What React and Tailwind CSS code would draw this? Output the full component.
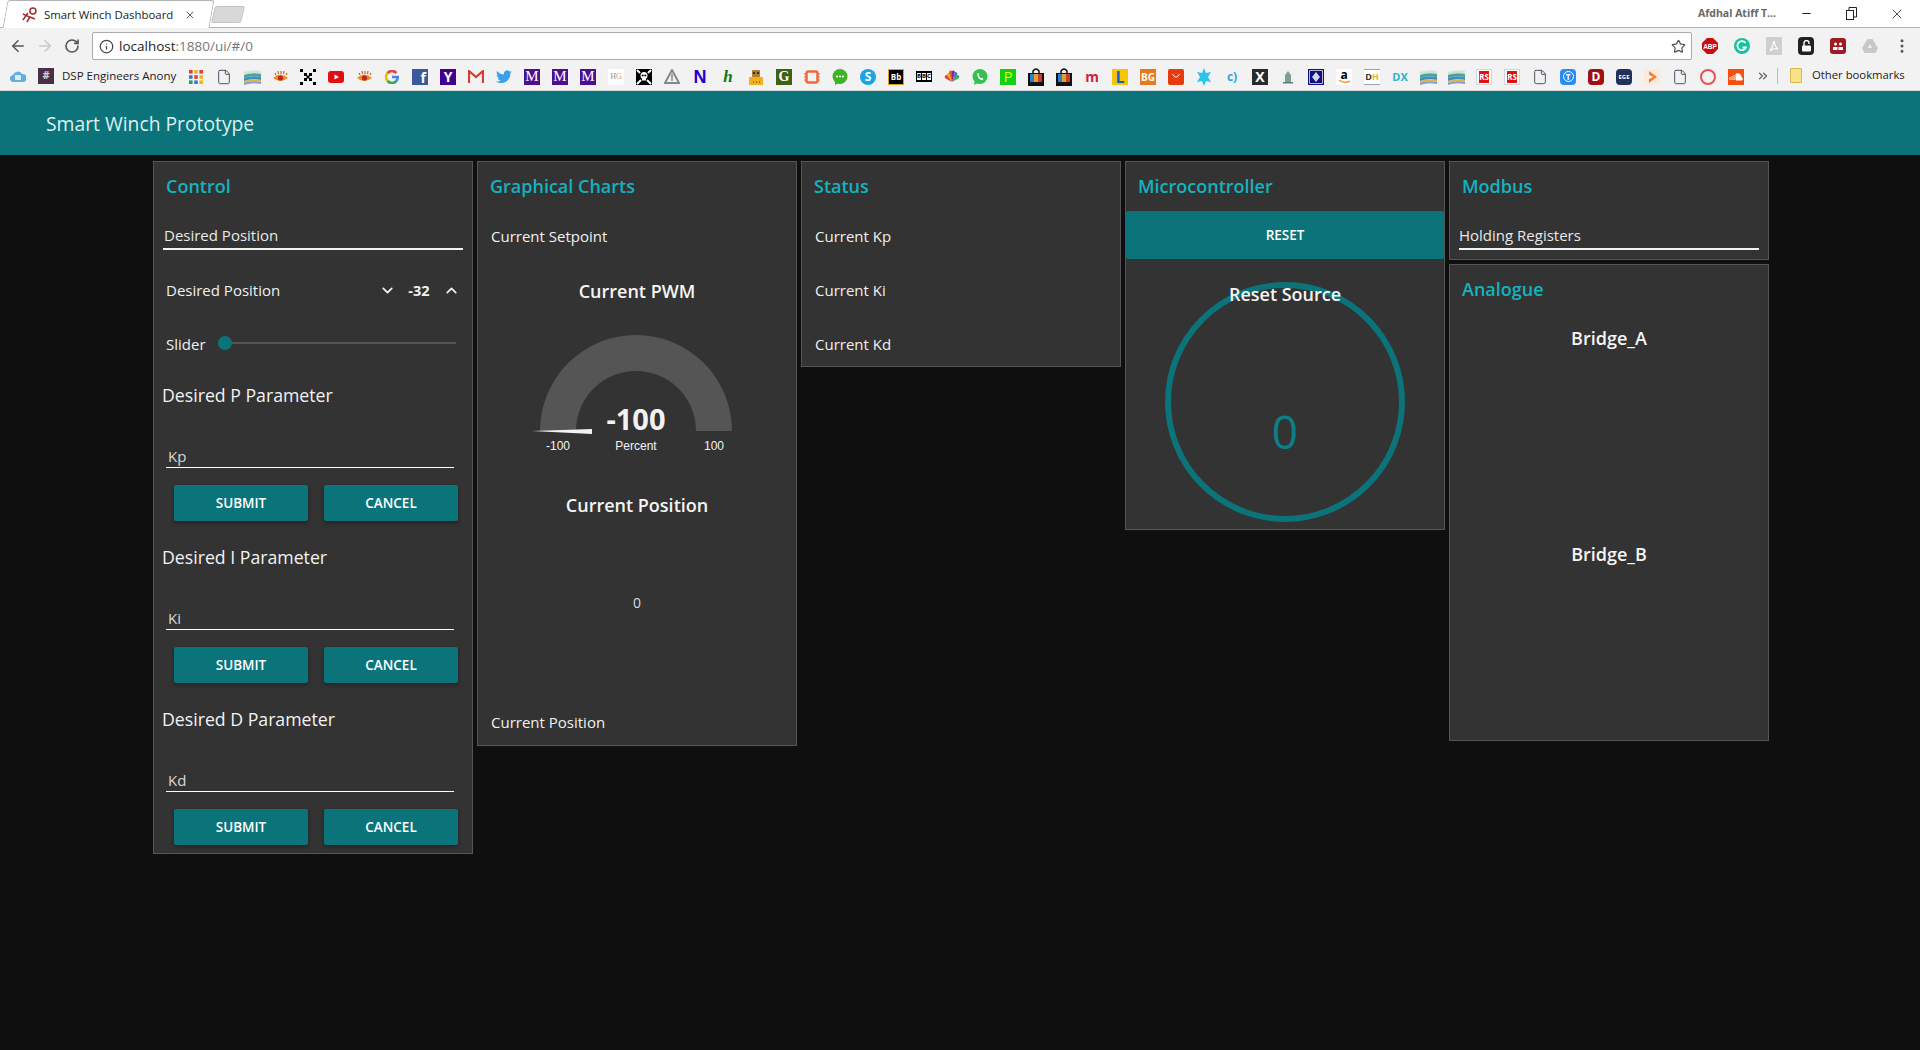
import React from 'react';
import { ArrowLeft, ArrowRight, RotateCw, Info, Star, ChevronDown, ChevronUp, X, Minus, EllipsisVertical, ChevronsRight, File } from 'lucide-react';

const uiFont = { fontFamily: '"Open Sans", sans-serif' };

// small square with letters, for the bookmark favicons
const Tile = ({ className, children }) => (
  <div className={`w-4 h-4 flex items-center justify-center leading-none font-bold ${className}`}>{children}</div>
);

const Doc = () => <File size={16} strokeWidth={1.5} className="text-gray-600" />;

const Layers = () => (
  <svg width="17" height="16" viewBox="0 0 17 16">
    <path d="M0 3 Q8 0 17 2 V5 Q8 3 0 6Z" fill="#cfe3dc" />
    <path d="M0 6 Q8 3 17 5 V8 Q8 6 0 9Z" fill="#4aa58f" />
    <path d="M0 9 Q8 6 17 8 V11 Q8 9 0 12Z" fill="#3f8fc4" />
    <path d="M0 12 Q8 9 17 11 V13 Q8 11 0 14Z" fill="#e2b04c" />
    <path d="M0 14 Q8 11 17 13 V15 Q8 13 0 16Z" fill="#7f9fd0" />
  </svg>
);

const Eye = () => (
  <svg width="17" height="14" viewBox="0 0 17 14">
    <path d="M1 8 Q8 1 16 8 Q8 14 1 8Z" fill="#f08a24" />
    <circle cx="8.5" cy="8" r="2.6" fill="#c0281c" />
    <path d="M3 3 L4 5 M6 1 L6.500 4 M9 1 L9 4 M12 1 L11.500 4 M15 3 L14 5" stroke="#e0561c" strokeWidth="1.200" />
  </svg>
);

const Bag = () => (
  <svg width="16" height="18" viewBox="0 0 16 18">
    <path d="M5 6 V3 Q8 -1 11 3 V6" fill="none" stroke="#111" strokeWidth="1.500" />
    <rect y="5" width="16" height="13" fill="#111" />
    <rect x="2" y="6" width="4" height="8" fill="#2a7fd0" />
    <rect x="6" y="6" width="4" height="8" fill="#e0a020" />
    <rect x="10" y="6" width="4" height="8" fill="#d03a2a" />
  </svg>
);

const MTile = () => <Tile className="bg-[#4b0f8f] text-white text-[15px] !font-normal" ><span style={{ fontFamily: '"Liberation Serif", serif' }}>M</span></Tile>;
const RsTile = () => <Tile className="bg-white border border-gray-300 text-[8px]"><span className="bg-[#e01010] text-white py-[2px]">RS</span></Tile>;

const bookmarks = [
  <svg width="14" height="14" viewBox="0 0 14 14">
    {['#e0402c', '#f2b01e', '#e0402c', '#3a78d8', '#e0402c', '#f2b01e', '#2f9e4f', '#3a78d8', '#f2b01e'].map((c, i) => (
      <rect key={i} x={(i % 3) * 5.2} y={Math.floor(i / 3) * 5.2} width="3.600" height="3.600" fill={c} />
    ))}
  </svg>,
  <Doc />,
  <Layers />,
  <Eye />,
  <svg width="16" height="16" viewBox="0 0 16 16" fill="#000">
    <path d="M0 0h3v3H0zM13 0h3v3h-3zM0 13h3v3H0zM13 13h3v3h-3zM4 4h3v3H4zM9 4h3v3H9zM4 9h3v3H4zM9 9h3v3H9zM6.500 6.500h3v3h-3z" />
  </svg>,
  <svg width="16" height="12" viewBox="0 0 16 12">
    <rect width="16" height="12" rx="3" fill="#e01010" />
    <path d="M6.500 3.500 L11 6 L6.500 8.500Z" fill="#fff" />
  </svg>,
  <Eye />,
  <svg width="14" height="14" viewBox="0 0 16 16" fill="none" strokeWidth="3">
    <path d="M13 3.500 A6.500 6.500 0 0 0 3 3.500" stroke="#e8433a" />
    <path d="M3 3.500 A6.500 6.500 0 0 0 3 12.500" stroke="#f4b400" />
    <path d="M3 12.500 A6.500 6.500 0 0 0 13 12.500" stroke="#34a853" />
    <path d="M13 12.500 A6.500 6.500 0 0 0 14.500 8 H8" stroke="#4285f4" />
  </svg>,
  <Tile className="bg-[#3b5998] text-white text-[14px] items-end justify-end pr-[2px]">f</Tile>,
  <Tile className="bg-[#400090] text-white text-[14px]">Y</Tile>,
  <svg width="16" height="13" viewBox="0 0 16 13">
    <rect width="16" height="13" fill="#f2f2f2" />
    <path d="M1 13 V1 L8 7 L15 1 V13" fill="none" stroke="#d23f31" strokeWidth="2.200" />
  </svg>,
  <svg width="16" height="14" viewBox="0 0 24 20">
    <path fill="#3aa0e8" d="M24 2.500c-.900.400-1.800.700-2.800.800 1-.600 1.800-1.600 2.200-2.700-1 .600-2 1-3.100 1.200A4.900 4.900 0 0 0 11.900 6.300C7.800 6.100 4.200 4.100 1.700.900c-1.300 2.200-.600 5.100 1.500 6.500-.800 0-1.600-.200-2.200-.600 0 2.300 1.600 4.400 3.900 4.900-.700.200-1.500.200-2.200.100.600 2 2.400 3.400 4.600 3.400A9.900 9.900 0 0 1 0 16.700 14 14 0 0 0 7.500 19c9.100 0 14.300-7.700 14-14.600 1-.700 1.800-1.500 2.500-1.900z" />
  </svg>,
  <MTile />,
  <MTile />,
  <MTile />,
  <Tile className="bg-white text-[8px] !font-normal text-[#8a93a8]"><span style={{ fontFamily: '"Liberation Serif", serif' }}>H<span className="text-[#c0a070]">G</span></span></Tile>,
  <svg width="16" height="16" viewBox="0 0 16 16">
    <rect width="16" height="16" fill="#000" />
    <circle cx="8" cy="6.500" r="3.500" fill="#fff" />
    <rect x="6" y="9" width="4" height="2.500" fill="#fff" />
    <path d="M1 1 L4 4 M15 1 L12 4 M1 15 L5 11 M15 15 L11 11" stroke="#fff" strokeWidth="2" />
    <circle cx="6.700" cy="6.500" r="1" fill="#000" />
    <circle cx="9.300" cy="6.500" r="1" fill="#000" />
  </svg>,
  <svg width="16" height="15" viewBox="0 0 16 15">
    <path d="M8 1 L15 14 H1Z" fill="#f2f2f2" stroke="#888" strokeWidth="2" />
    <path d="M8 5 V12" stroke="#888" strokeWidth="1.500" />
  </svg>,
  <Tile className="text-[#2000d0] text-[18px]"><span style={{ fontFamily: '"Liberation Sans", sans-serif' }}>N</span></Tile>,
  <Tile className="text-[#0a7a10] text-[17px] italic"><span style={{ fontFamily: '"Liberation Serif", serif' }}>h</span></Tile>,
  <svg width="16" height="16" viewBox="0 0 16 16">
    <rect x="1" y="8" width="14" height="8" rx="1" fill="#f2b01e" />
    <rect x="4" y="1" width="8" height="7" rx="1" fill="#b07a30" />
    <rect x="5" y="3" width="2" height="2" fill="#333" />
    <rect x="9" y="3" width="2" height="2" fill="#333" />
    <path d="M5 13h1M8 13h1M11 13h1" stroke="#333" />
  </svg>,
  <Tile className="bg-[#3f6212] text-white text-[14px]"><span style={{ fontFamily: '"Liberation Serif", serif' }}>G</span></Tile>,
  <svg width="16" height="16" viewBox="0 0 16 16" fill="none">
    <rect x="2.500" y="2.500" width="11" height="11" rx="2" stroke="#f0683a" strokeWidth="2.500" />
    <path d="M0 5h2M0 8h2M0 11h2M14 5h2M14 8h2M14 11h2" stroke="#f0683a" />
  </svg>,
  <svg width="16" height="16" viewBox="0 0 16 16">
    <circle cx="8" cy="7.500" r="7.500" fill="#3cb521" />
    <path d="M3 13 L3 16 L7 14Z" fill="#3cb521" />
    <circle cx="5" cy="7.500" r="1.100" fill="#fff" />
    <circle cx="8" cy="7.500" r="1.100" fill="#fff" />
    <circle cx="11" cy="7.500" r="1.100" fill="#fff" />
  </svg>,
  <div className="w-4 h-4 rounded-full bg-[#1ba5e8] flex items-center justify-center text-white text-[12px] font-bold leading-none">S</div>,
  <Tile className="bg-black border border-[#e0a020] text-white text-[8px]">Bb</Tile>,
  <div className="flex gap-[1px] bg-black px-[1px] py-[2px]">
    {['B', 'B', 'C'].map((l, i) => <span key={i} className="bg-white text-black text-[6px] leading-[7px] font-bold w-[4px] text-center">{l}</span>)}
  </div>,
  <svg width="16" height="13" viewBox="0 0 16 13">
    <path d="M8 12 L3 5 A2 2 0 0 1 6 3Z" fill="#f2b01e" />
    <path d="M8 12 L5 2 A2 2 0 0 1 8 1Z" fill="#e0561c" />
    <path d="M8 12 V1 A2 2 0 0 1 11 2Z" fill="#a0207a" />
    <path d="M8 12 L11 2 A2 2 0 0 1 13 5Z" fill="#3a78d8" />
    <path d="M8 12 L13 5 A2 2 0 0 1 15 8Z" fill="#34a853" />
    <path d="M8 12 L3 5 A2 2 0 0 0 1 8Z" fill="#e0402c" />
  </svg>,
  <svg width="16" height="16" viewBox="0 0 16 16">
    <circle cx="8" cy="7.500" r="7.500" fill="#36c14f" />
    <path d="M2 16 L3 11 L6 14Z" fill="#36c14f" />
    <path d="M5.500 4 Q4.500 6 6.500 9 Q9 11.800 11.500 10.500 L10.500 8.800 L9.200 9.300 Q7.500 8.300 6.800 6.800 L7.500 5.800 L6.500 4Z" fill="#fff" />
  </svg>,
  <Tile className="bg-[#12d012] text-[#f2f20a] text-[15px] !font-normal">P</Tile>,
  <Bag />,
  <Bag />,
  <Tile className="text-[#d8203c] text-[14px]">m</Tile>,
  <Tile className="bg-[#f7c600] text-[#1460c0] text-[16px]">L</Tile>,
  <Tile className="bg-[#e8791e] text-white text-[10px]">BG</Tile>,
  <svg width="16" height="16" viewBox="0 0 16 16">
    <rect width="16" height="16" rx="2" fill="#e83a10" />
    <path d="M4.500 5 Q8 11.500 11.500 5" fill="none" stroke="#fff" />
  </svg>,
  <svg width="16" height="18" viewBox="0 0 16 18" fill="#2cc4e8">
    <path d="M8 0 L10 5 L15 4 L12 9 L15 14 L10 13 L8 18 L6 13 L1 14 L4 9 L1 4 L6 5Z" />
  </svg>,
  <Tile className="text-[#2aa8e0] text-[12px]">c)</Tile>,
  <Tile className="bg-[#2a2a2a] text-white text-[14px]">X</Tile>,
  <svg width="16" height="16" viewBox="0 0 16 16">
    <rect width="16" height="16" fill="#eef2f0" />
    <path d="M8 2 L11 6 V13 H5 V6Z" fill="#7f9f94" />
    <rect x="3" y="13" width="10" height="1.500" fill="#5f8074" />
  </svg>,
  <svg width="16" height="16" viewBox="0 0 16 16">
    <rect x=".500" y=".500" width="15" height="15" fill="#f2f2f2" stroke="#101080" strokeWidth="1.500" />
    <rect x="2" y="2" width="12" height="12" fill="#101080" />
    <path d="M8 3 L12 8 L8 13 L4 8Z" fill="#cdd8f0" />
  </svg>,
  <div className="w-4 h-4 bg-white flex flex-col items-center leading-none">
    <span className="text-black text-[12px] font-bold leading-[11px]">a</span>
    <svg width="13" height="4" viewBox="0 0 13 4"><path d="M1 0 Q6 4 12 1" fill="none" stroke="#f29a1e" strokeWidth="1.500" /></svg>
  </div>,
  <Tile className="bg-white border-y border-gray-400 text-[#333] text-[9px]">D<span className="text-[#f2b01e]">H</span></Tile>,
  <Tile className="text-[#2ab0d0] text-[11px]">DX</Tile>,
  <Layers />,
  <Layers />,
  <RsTile />,
  <RsTile />,
  <Doc />,
  <div className="w-4 h-4 rounded bg-[#2a8cf0] flex items-center justify-center text-white text-[8px] font-bold leading-none"><span className="border border-white rounded-full w-[11px] h-[11px] flex items-center justify-center">T</span></div>,
  <Tile className="bg-[#a01010] text-white text-[12px] rounded">D</Tile>,
  <Tile className="bg-[#22305a] text-white text-[6px] rounded-[4px]">EGE</Tile>,
  <svg width="16" height="16" viewBox="0 0 16 16">
    <rect width="16" height="16" fill="#fbe9dc" />
    <path d="M5 2 L13 8 L5 14Z" fill="#f0833a" />
    <path d="M5 6 L9 8 L5 10Z" fill="#fff" />
  </svg>,
  <Doc />,
  <div className="w-4 h-4 rounded-full border-[2.5px] border-[#e8505a]" />,
  <svg width="16" height="16" viewBox="0 0 16 16">
    <rect width="16" height="16" fill="#f5500f" />
    <path d="M2 11 V8 M4 11 V7 M6 11 V6 M8 11 V5 Q13 4 13 8 Q15 9 14 11Z" stroke="#fff" fill="#fff" />
  </svg>,
];

const extensions = [
  <svg width="16" height="16" viewBox="0 0 16 16">
    <path d="M5 0 H11 L16 5 V11 L11 16 H5 L0 11 V5Z" fill="#c70d0d" />
    <text x="8" y="10.500" textAnchor="middle" fontSize="6.500" fontWeight="700" fill="#fff" fontFamily="Liberation Sans">ABP</text>
  </svg>,
  <svg width="16" height="16" viewBox="0 0 16 16">
    <circle cx="8" cy="8" r="8" fill="#15c39a" />
    <path d="M11.500 5 A4.500 4.500 0 1 0 12 9.500 H8.500" fill="none" stroke="#fff" strokeWidth="1.800" />
  </svg>,
  <div className="w-4 h-[18px] bg-[#cfcfcf] flex items-center justify-center">
    <svg width="10" height="12" viewBox="0 0 10 12" fill="none" stroke="#fff" strokeWidth="1.200"><path d="M1 11 Q4 7 5 1 Q6 7 9 9 Q4 8 1 11Z" /></svg>
  </div>,
  <div className="w-4 h-[18px] rounded-[4px] bg-[#222] flex items-center justify-center">
    <svg width="9" height="12" viewBox="0 0 9 12"><path d="M2 6 V3 A2.500 2.500 0 0 1 7 3 V4" fill="none" stroke="#fff" strokeWidth="1.400" /><rect y="5.500" width="9" height="6" rx="1" fill="#fff" /></svg>
  </div>,
  <div className="w-4 h-4 rounded-[3px] bg-[#9b1c22] flex items-center justify-center">
    <svg width="10" height="8" viewBox="0 0 10 8" fill="#fff"><circle cx="2.500" cy="2" r="1.500" /><circle cx="7.500" cy="2" r="1.500" /><path d="M0 8 V5 H4.500 V8ZM5.500 8 V5 H10 V8Z" /></svg>
  </div>,
  <svg width="16" height="16" viewBox="0 0 16 16">
    <path d="M5.500 1 H10.500 L16 10 L13.500 15 H2.500 L0 10Z" fill="#c8c8c8" />
    <path d="M8 6 L10 10 H6Z" fill="#f2f2f2" />
  </svg>,
  <EllipsisVertical size={18} className="text-[#555]" />,
];

const Panel = ({ title, className = '', children }) => (
  <div className={`w-[320px] bg-[#333333] border border-[#555555] ${className}`}>
    {title && <div className="h-[50px] pt-[11px] pl-[12px] text-[18px] leading-[26px] font-semibold text-[#12b3bf]">{title}</div>}
    {children}
  </div>
);

const TealButton = ({ children }) => (
  <button className="w-[134px] h-[36px] bg-[#0a747a] text-white text-[13.5px] font-semibold rounded-[2px] shadow-[0_2px_4px_rgba(0,0,0,0.35)]">{children}</button>
);

const ParamForm = ({ heading, field }) => (
  <div className="h-[162px]">
    <div className="h-[30px] pl-[8px] text-[17.7px] leading-[30px] text-[#f2f2f2]">{heading}</div>
    <div className="mt-[31px] mx-[12px] h-[27px] w-[288px] border-b border-white pl-[2px] pt-[4px] text-[15px] leading-[22px] text-[#d8d8d8]">{field}</div>
    <div className="mt-[17px] pl-[20px] flex gap-[16px]">
      <TealButton>SUBMIT</TealButton>
      <TealButton>CANCEL</TealButton>
    </div>
  </div>
);

const Row = ({ children }) => (
  <div className="h-[54px] flex items-center pl-[13px] text-[15px] text-[#f0f0f0]">{children}</div>
);

const Heading = ({ className = '', children }) => (
  <div className={`text-center text-[18px] font-semibold text-[#f5f5f5] ${className}`}>{children}</div>
);

export default function App() {
  return (
    <div className="min-h-[1050px] bg-[#0f0f0f]" style={uiFont}>
      {/* browser tab strip */}
      <div className="h-[28px] bg-white flex items-end relative border-b border-[#b4b4b4]">
        <div className="ml-[5px] w-[207px] h-[28px] border-x border-t border-[#b4b4b4] border-b-0 rounded-t-[3px] -skew-x-[10deg] bg-white mb-[-1px]">
          <div className="skew-x-[10deg] h-full flex items-center pl-[16px]">
            <svg width="16" height="16" viewBox="0 0 16 16" fill="none" stroke="#a52a2a" strokeWidth="1.500">
              <path d="M1 7 L8 10 L5 15 M8 10 L13 12 M1 13 L6 6" />
              <circle cx="11" cy="4" r="3" />
            </svg>
            <span className="ml-[6px] w-[131px] text-[11.4px] text-[#222] whitespace-nowrap">Smart Winch Dashboard</span>
            <X size={12} strokeWidth={2} className="ml-[9px] text-[#555]" />
          </div>
        </div>
        <div className="ml-[1px] mb-[4px] w-[30px] h-[17px] bg-[#d8d8d8] border border-[#c4c4c4] -skew-x-[14deg] rounded-[2px]" />
        <div className="flex-1" />
        <div className="self-center flex items-center">
          <span className="w-[76px] text-[10.5px] text-[#666] font-bold whitespace-nowrap">Afdhal Atiff T...</span>
          <div className="w-[45px] flex justify-center ml-[10px]"><Minus size={13} className="text-[#222]" /></div>
          <div className="w-[45px] flex justify-center">
            <svg width="11" height="13" viewBox="0 0 11 13" fill="none" stroke="#222"><rect x=".500" y="3.500" width="7" height="9" /><path d="M3 3 V.500 H10.500 V10 H8" /></svg>
          </div>
          <div className="w-[46px] flex justify-center"><X size={16} strokeWidth={1.200} className="text-[#222]" /></div>
        </div>
      </div>
      {/* toolbar */}
      <div className="h-[34px] bg-[#f2f2f2] flex items-center">
        <div className="w-[92px] flex items-center pl-[9px] gap-[9px] pt-[2px]">
          <ArrowLeft size={18} className="text-[#555]" />
          <ArrowRight size={18} className="text-[#c8c8c8]" />
          <RotateCw size={16} strokeWidth={2.400} className="text-[#555] ml-[1px]" />
        </div>
        <div className="w-[1600px] h-[28px] mt-[1px] bg-white border border-[#ababab] rounded-[2px] flex items-center pl-[6px] pr-[5px] pt-[1px]">
          <Info size={15} className="text-[#444]" />
          <span className="ml-[5px] text-[13.5px] text-[#222]">localhost<span className="text-[#777]">:1880/ui/#/0</span></span>
          <div className="flex-1" />
          <Star size={15} className="text-[#555]" />
        </div>
        <div className="ml-[2px] flex pt-[1px]">
          {extensions.map((icon, i) => <div key={i} className="w-[32px] flex justify-center items-center">{icon}</div>)}
        </div>
      </div>
      {/* bookmarks */}
      <div className="h-[29px] pb-[1px] bg-[#f2f2f2] flex items-center border-b border-[#d8d8d8]">
        <svg className="ml-[10px]" width="16" height="14" viewBox="0 0 16 14">
          <path d="M4 13 A3.500 3.500 0 0 1 3 6 A5 5 0 0 1 12 5 A4 4 0 0 1 13 13Z" fill="#62aee0" />
          <rect x="5" y="6" width="6" height="5" fill="#d8ecf8" />
        </svg>
        <div className="ml-[12px] w-[16px] h-4 bg-[#4a2f46] text-[#cfcfcf] text-[11px] font-bold flex items-center justify-center">#</div>
        <span className="ml-[8px] w-[118px] text-[11.5px] whitespace-nowrap text-[#222]">DSP Engineers Anony</span>
        <div className="flex ml-[2px] pt-[2px]">
          {bookmarks.map((icon, i) => <div key={i} className="w-[28px] flex justify-center items-center">{icon}</div>)}
        </div>
        <ChevronsRight size={14} className="ml-[6px] text-[#555]" />
        <div className="ml-[7px] w-px h-[16px] bg-[#bdbdbd]" />
        <div className="ml-[12px] w-[12px] h-[15px] bg-[#fbe08a] border border-[#d8b94e] rounded-[1px]" />
        <span className="ml-[10px] text-[11.3px] text-[#222] whitespace-nowrap">Other bookmarks</span>
      </div>

      {/* dashboard */}
      <div className="h-[64px] bg-[#0a747a] flex items-center pl-[46px] pt-[2px] text-[19.3px] text-[#dff0f0]">Smart Winch Prototype</div>

      <div className="pt-[6px] pl-[153px] flex items-start gap-[4px]">
        <Panel title="Control" className="h-[693px]">
          <div className="mx-[9px] h-[38px] border-b-2 border-[#f2f2f2] text-[15px] leading-[24px] text-[#e8e8e8] pt-[11px] pl-[1px]">Desired Position</div>
          <div className="h-[41px] mt-[20px] flex items-center pl-[12px] text-[15px] text-[#f0f0f0]">
            <span>Desired Position</span>
            <ChevronDown size={17} strokeWidth={2.500} className="ml-[99px]" />
            <span className="ml-[12px] w-[30px] text-[14.5px] font-bold">-32</span>
            <ChevronUp size={17} strokeWidth={2.500} className="ml-[5px]" />
          </div>
          <div className="h-[36px] mt-[14px] flex items-center pl-[12px] text-[15px] text-[#f0f0f0]">
            <span className="pt-[2px]">Slider</span>
            <div className="ml-[12px] w-[238px] flex items-center">
              <div className="w-[14px] h-[14px] rounded-full bg-[#0a747a]" />
              <div className="flex-1 h-[2px] bg-[#555555]" />
            </div>
          </div>
          <div className="pt-[19px]">
            <ParamForm heading="Desired P Parameter" field="Kp" />
            <ParamForm heading="Desired I Parameter" field="Ki" />
            <ParamForm heading="Desired D Parameter" field="Kd" />
          </div>
        </Panel>

        <Panel title="Graphical Charts" className="h-[585px]">
          <div className="-mt-[3px]"><Row>Current Setpoint</Row></div>
          <Heading className="mt-[15px]">Current PWM</Heading>
          <div className="flex justify-center mt-[29px]">
            <svg width="230" height="125" viewBox="2 0 230 125">
              <path d="M20 97 A96 96 0 0 1 212 97 H176 A60 60 0 0 0 56 97Z" fill="#555555" />
              <path d="M12 97 L72 95 V100Z" fill="#f2f2f2" />
              <text x="116" y="96" textAnchor="middle" fontSize="29" fontWeight="700" fill="#f2f2f2" fontFamily="Open Sans">-100</text>
              <text x="38" y="116" textAnchor="middle" fontSize="12" fill="#f2f2f2" fontFamily="Liberation Sans">-100</text>
              <text x="116" y="116" textAnchor="middle" fontSize="12" fill="#f2f2f2" fontFamily="Liberation Sans">Percent</text>
              <text x="194" y="116" textAnchor="middle" fontSize="12" fill="#f2f2f2" fontFamily="Liberation Sans">100</text>
            </svg>
          </div>
          <Heading className="mt-[33px]">Current Position</Heading>
          <div className="mt-[73px] text-center text-[14px] text-[#dddddd]">0</div>
          <div className="mt-[98px] pl-[13px] text-[15px] text-[#f0f0f0]">Current Position</div>
        </Panel>

        <Panel title="Status" className="h-[206px]">
          <div className="-mt-[3px]">
            <Row>Current Kp</Row>
            <Row>Current Ki</Row>
            <Row>Current Kd</Row>
          </div>
        </Panel>

        <Panel title="Microcontroller" className="h-[369px] relative">
          <button className="w-full h-[48px] -mt-[1px] bg-[#0a747a] text-white text-[13.5px] font-semibold rounded-[2px]">RESET</button>
          <div className="relative mt-[23px] mx-auto w-[240px] h-[240px] rounded-full border-[6px] border-[#0a747a] flex justify-center">
            <Heading className="absolute -top-[8px] leading-[28px]">Reset Source</Heading>
            <div className="mt-[113px] text-[46px] leading-[60px] font-normal text-[#0a7f86]">0</div>
          </div>
        </Panel>

        <div className="flex flex-col gap-[4px]">
          <Panel title="Modbus" className="h-[99px]">
            <div className="mx-[9px] h-[38px] border-b-2 border-[#f2f2f2] text-[15px] leading-[24px] text-[#e8e8e8] pt-[11px]">Holding Registers</div>
          </Panel>
          <Panel title="Analogue" className="h-[477px]">
            <Heading className="mt-[10px]">Bridge_A</Heading>
            <Heading className="mt-[189px]">Bridge_B</Heading>
          </Panel>
        </div>
      </div>
    </div>
  );
}
